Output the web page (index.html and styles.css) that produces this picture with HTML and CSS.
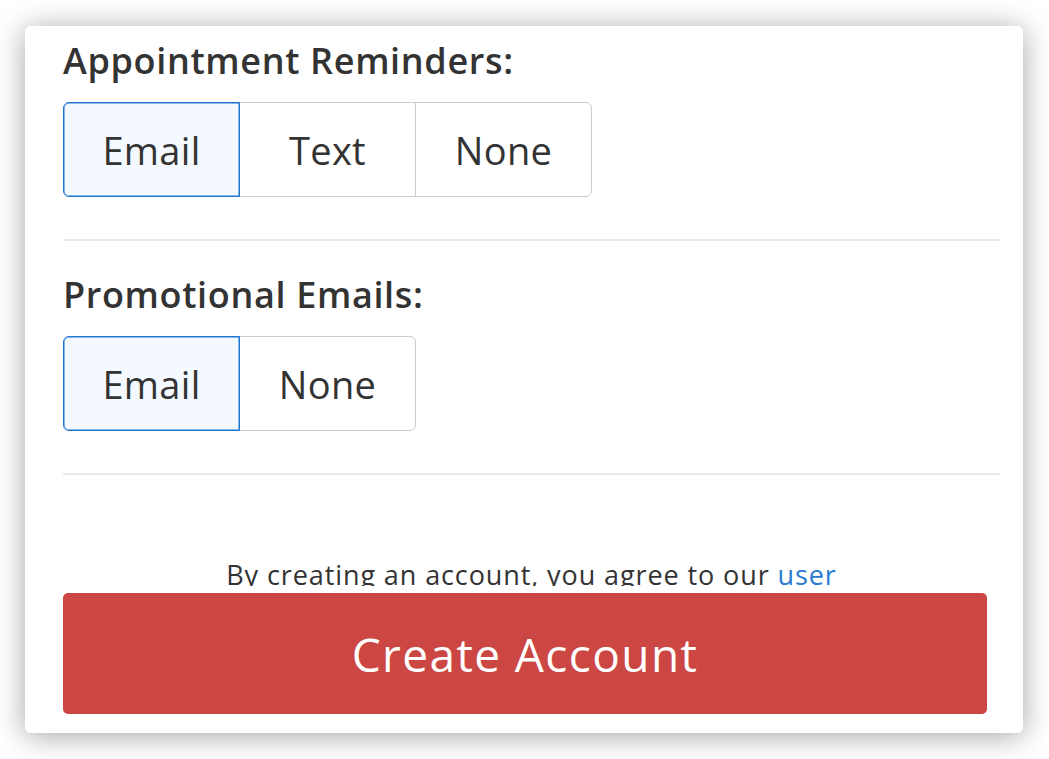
FILE: index.html
```html
<!DOCTYPE html>
<html lang="en">
<head>
<meta charset="utf-8">
<title>Notification preferences</title>
<link rel="stylesheet" href="styles.css">
</head>
<body>
<div class="card">
  <section class="pref">
    <h2 class="pref-title">Appointment Reminders:</h2>
    <div class="seg">
      <button class="seg-btn is-active">Email</button>
      <button class="seg-btn">Text</button>
      <button class="seg-btn">None</button>
    </div>
  </section>
  <hr class="divider">
  <section class="pref">
    <h2 class="pref-title">Promotional Emails:</h2>
    <div class="seg">
      <button class="seg-btn is-active">Email</button>
      <button class="seg-btn">None</button>
    </div>
  </section>
  <hr class="divider">
  <div class="legal">
    <p class="legal-text">By creating an account, you agree to our <a href="#">user</a></p>
  </div>
  <div class="footer">
    <button class="cta">Create Account</button>
  </div>
</div>
</body>
</html>
```

FILE: styles.css
```css
html, body {
  margin: 0;
  padding: 0;
  background: #ffffff;
}
body {
  font-family: "Open Sans", Lato, Arial, sans-serif;
  color: #333333;
  padding: 26px 26px 26px 25px;
  box-sizing: border-box;
  height: 759px;
  overflow: hidden;
}
.card {
  display: flex;
  flex-direction: column;
  width: 998px;
  height: 707px;
  box-sizing: border-box;
  background: #ffffff;
  border-radius: 6px;
  box-shadow: 0 3px 30px rgba(0, 0, 0, 0.36);
  padding: 15px 23px 20px 38px;
  overflow: hidden;
}
.pref-title {
  margin: 0;
  font-size: 36px;
  line-height: 40px;
  font-weight: 600;
  letter-spacing: 0.65px;
  color: #333333;
}
.seg {
  display: flex;
  margin-top: 21px;
}
.seg-btn {
  width: 177px;
  height: 95px;
  box-sizing: border-box;
  border: 1px solid #cccccc;
  background: #ffffff;
  font-family: inherit;
  font-size: 38px;
  letter-spacing: 0.3px;
  color: #333333;
  padding: 0;
  margin: 0 0 0 -1px;
  position: relative;
}
.seg-btn:first-child {
  margin-left: 0;
  border-radius: 6px 0 0 6px;
}
.seg-btn:last-child {
  border-radius: 0 6px 6px 0;
}
.seg-btn.is-active {
  background: #f4f9ff;
  border-color: #1f76d0;
  box-shadow: inset 0 0 0 0.5px #1f76d0;
  z-index: 1;
}
.divider {
  flex: none;
  width: 100%;
  border: 0;
  border-top: 2px solid #e8e8e8;
  margin: 42px 0 34px 0;
}
.legal {
  flex: none;
  margin-top: 46px;
  height: 31px;
  overflow: hidden;
}
.legal-text {
  margin: 0;
  text-align: center;
  font-size: 27px;
  line-height: 39px;
  letter-spacing: 0.9px;
  color: #333333;
}
.legal-text a {
  color: #2a7bd0;
  text-decoration: none;
}
.footer {
  flex: none;
  margin-top: 7px;
  padding-right: 13px;
}
.cta {
  display: block;
  width: 100%;
  height: 121px;
  border: 0;
  border-radius: 5px;
  background: #cc4643;
  color: #ffffff;
  font-family: inherit;
  font-size: 46px;
  letter-spacing: 1.4px;
  font-weight: 400;
}
```
